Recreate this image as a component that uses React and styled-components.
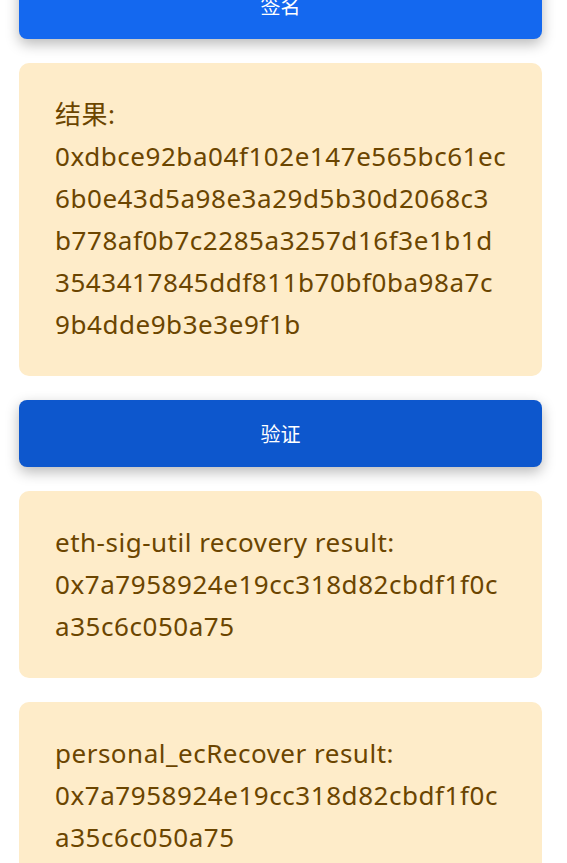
import React from "react"
import styled, { createGlobalStyle } from "styled-components"

const GlobalStyle = createGlobalStyle`
  html, body {
    margin: 0;
    padding: 0;
    background: #fff;
  }
  body {
    font-family: "Noto Sans", "Noto Sans CJK SC", sans-serif;
    overflow: hidden;
  }
`

const Page = styled.div`
  display: flex;
  flex-direction: column;
  gap: 24px;
  padding: 0 25px 40px 19px;
  margin-top: -28px;
`

const Button = styled.button`
  height: 67px;
  width: 100%;
  border: none;
  border-radius: 8px;
  background: ${(p) => (p.active ? "#1468ef" : "#0d57cd")};
  color: #fff;
  font-family: "Noto Sans CJK SC", sans-serif;
  font-size: 20px;
  box-shadow: 0 5px 14px rgba(0, 0, 0, 0.28);
  cursor: pointer;
`

const Card = styled.div`
  background: #feecc9;
  border-radius: 10px;
  padding: 30px 30px 31px 36px;
  color: #6b4500;
  font-size: 26px;
  line-height: 42px;
  letter-spacing: 0.5px;
`

const Label = styled.div``

const Line = styled.div`
  white-space: nowrap;
  letter-spacing: 0.55px;
`

// the signature/address as it wraps inside the card
const Value = ({ lines }) => (
  <div>
    {lines.map((part, i) => (
      <Line key={i}>{part}</Line>
    ))}
  </div>
)

const signature = [
  "0xdbce92ba04f102e147e565bc61ec",
  "6b0e43d5a98e3a29d5b30d2068c3",
  "b778af0b7c2285a3257d16f3e1b1d",
  "3543417845ddf811b70bf0ba98a7c",
  "9b4dde9b3e3e9f1b"
]

const address = ["0x7a7958924e19cc318d82cbdf1f0c", "a35c6c050a75"]

export default function App() {
  return (
    <>
      <GlobalStyle />
      <Page>
        <Button active>签名</Button>
        <Card>
          <Label>结果:</Label>
          <Value lines={signature} />
        </Card>
        <Button>验证</Button>
        <Card>
          <Label>eth-sig-util recovery result:</Label>
          <Value lines={address} />
        </Card>
        <Card>
          <Label>personal_ecRecover result:</Label>
          <Value lines={address} />
        </Card>
      </Page>
    </>
  )
}
